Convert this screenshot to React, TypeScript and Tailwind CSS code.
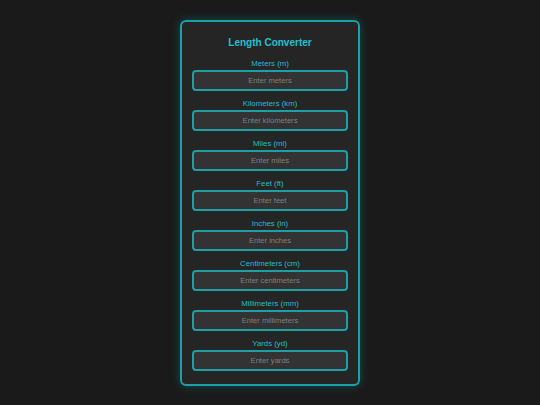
import React from "react";

const units = [
  { label: "Meters (m)", ph: "Enter meters" },
  { label: "Kilometers (km)", ph: "Enter kilometers" },
  { label: "Miles (mi)", ph: "Enter miles" },
  { label: "Feet (ft)", ph: "Enter feet" },
  { label: "Inches (in)", ph: "Enter inches" },
  { label: "Centimeters (cm)", ph: "Enter centimeters" },
  { label: "Millimeters (mm)", ph: "Enter millimeters" },
  { label: "Yards (yd)", ph: "Enter yards" },
];

export default function App() {
  return (
    <div
      className="min-h-screen w-full flex items-center justify-center bg-[#1a1a1a]"
      style={{ fontFamily: '"Liberation Sans", Arial, sans-serif' }}
    >
      <div className="w-[180px] rounded-[6px] border-2 border-[#1c9fa5] bg-[#252525] px-[10px] pt-[15px] pb-[13px] shadow-[0_0_10px_rgba(0,200,220,0.3)] flex flex-col">
        <h1 className="text-[10px] leading-[12px] font-bold text-center text-[#22c2d2] mb-[9px]">
          Length Converter
        </h1>
        <div className="flex flex-col gap-[7px]">
          {units.map((u) => (
            <div key={u.label} className="flex flex-col">
              <label className="text-[7.8px] leading-[11px] text-center text-[#24bccb] mb-[1px]">
                {u.label}
              </label>
              <input
                type="text"
                placeholder={u.ph}
                className="h-[21px] w-full rounded-[4px] border-2 border-[#1c9fa5] bg-[#333333] text-center text-[7.6px] text-[#ddd] placeholder:text-[#808080] outline-none"
              />
            </div>
          ))}
        </div>
      </div>
    </div>
  );
}
